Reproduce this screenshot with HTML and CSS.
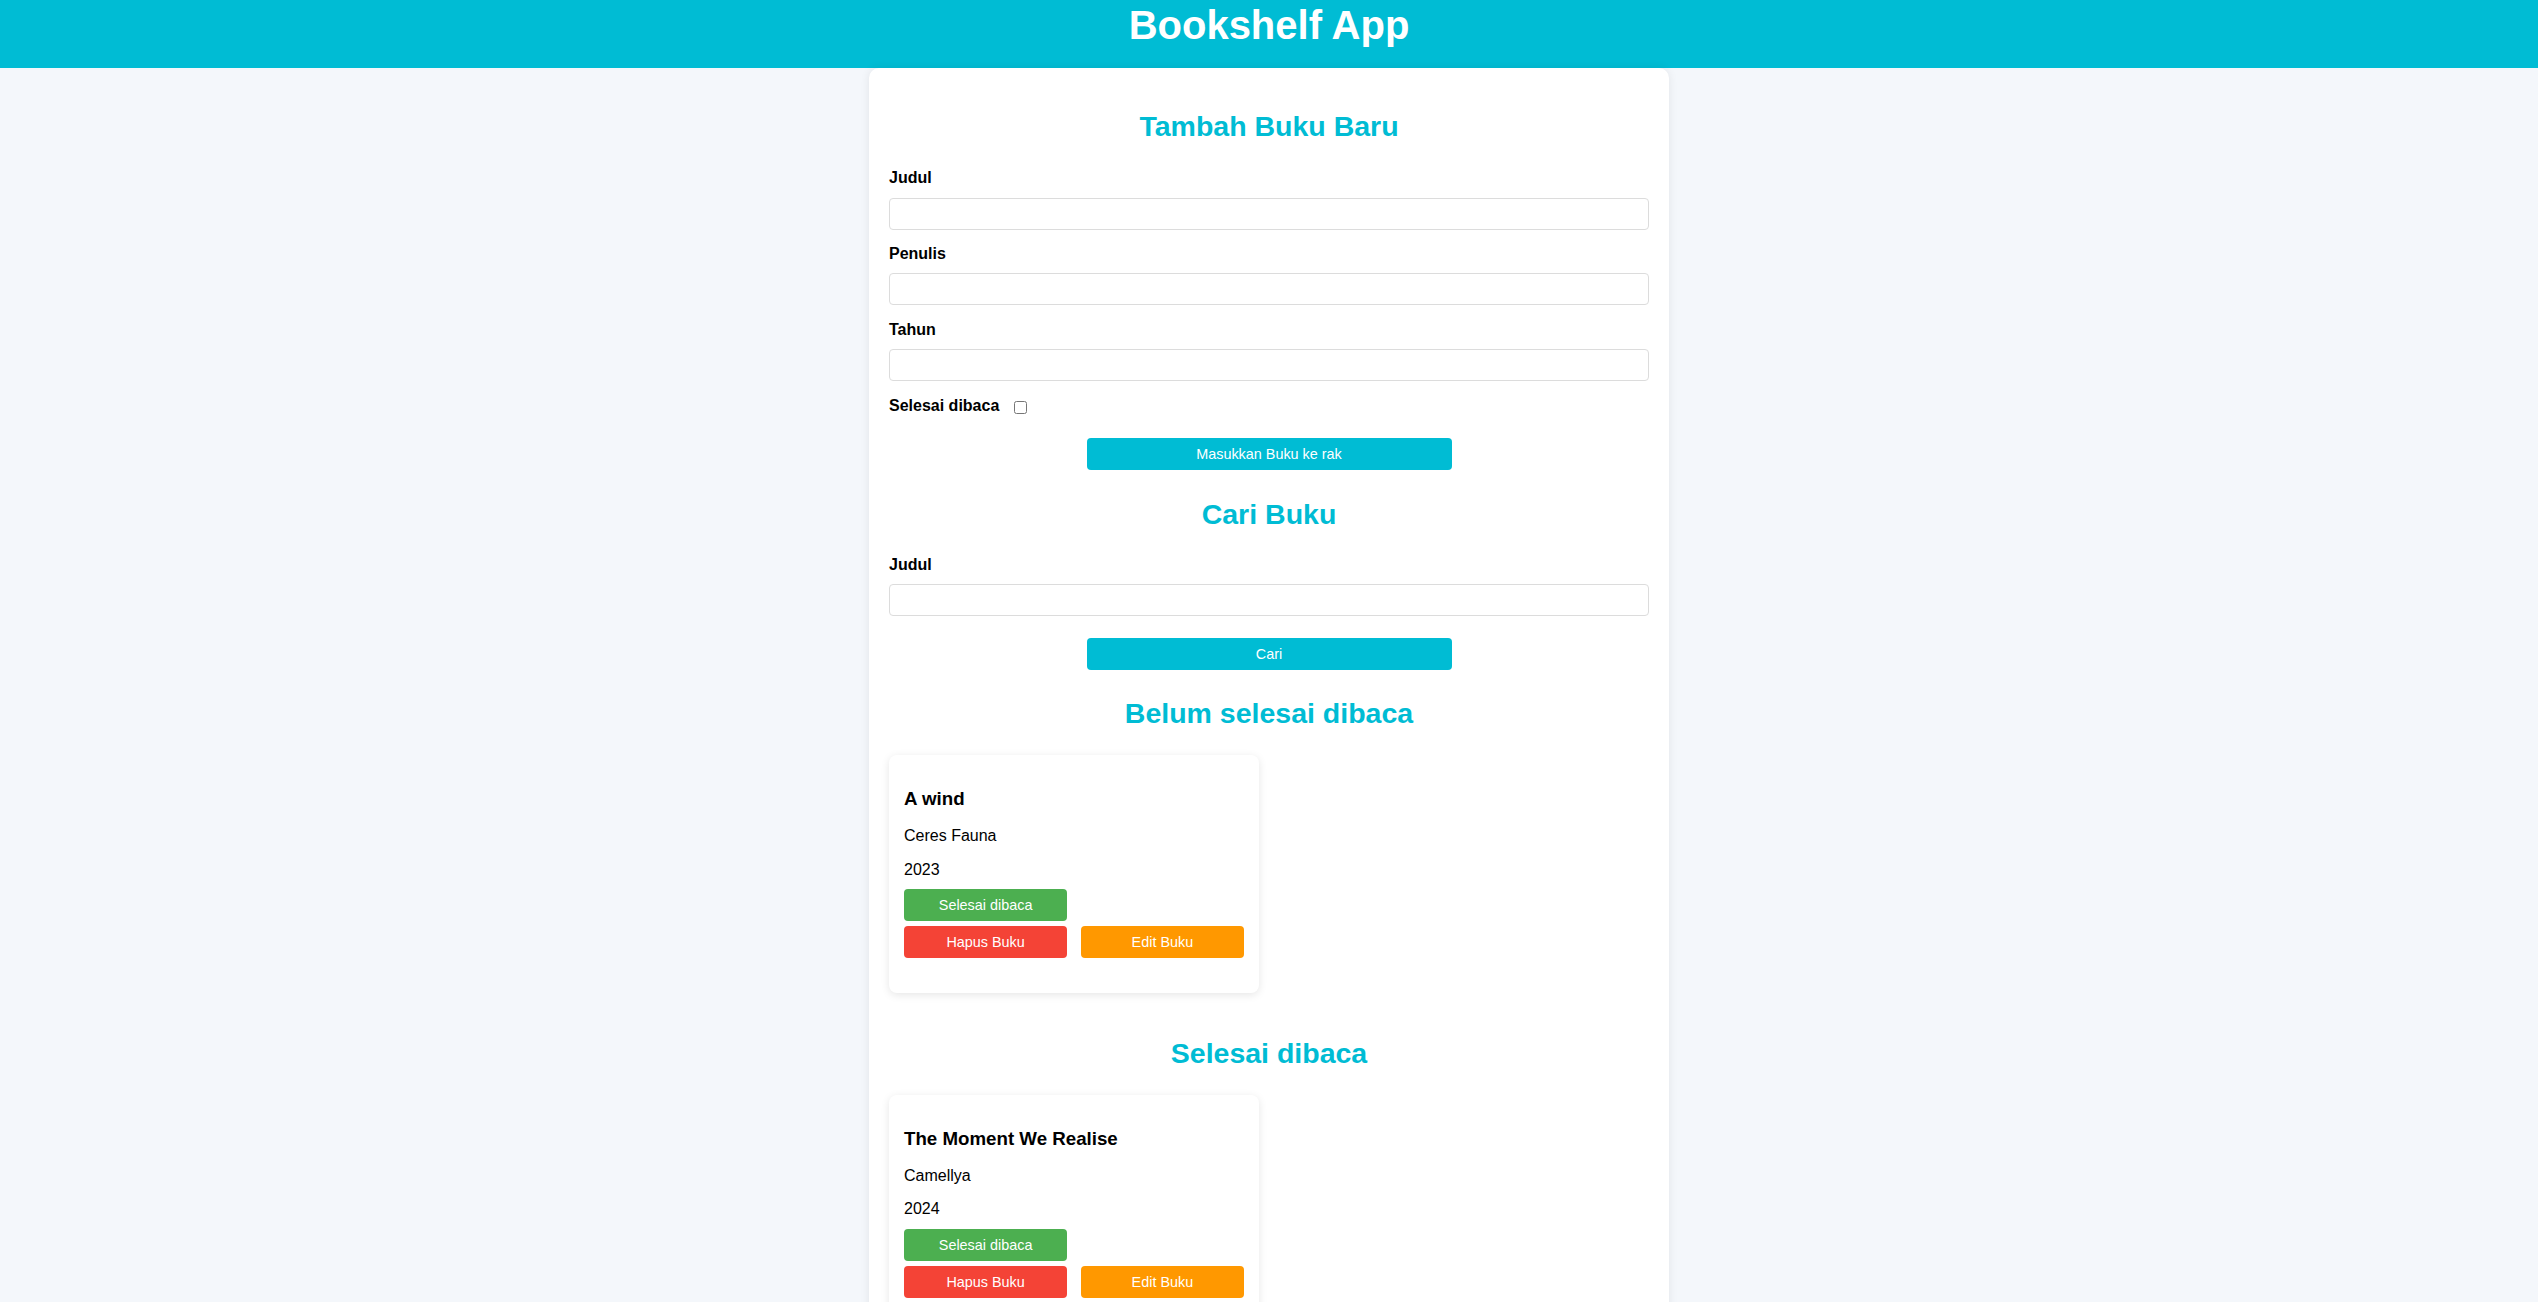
FILE: index.html
```html
<!DOCTYPE html>
<html lang="id">
<head>
<meta charset="utf-8">
<title>Bookshelf App</title>
<link rel="stylesheet" href="styles.css">
</head>
<body>
<header class="app-header">
  <h1 class="app-title">Bookshelf App</h1>
</header>
<main class="container">
  <section class="panel">
    <h2 class="section-title first">Tambah Buku Baru</h2>
    <form class="book-form">
      <div class="field">
        <label class="field-label" for="bookTitle">Judul</label>
        <input class="field-input" id="bookTitle" type="text">
      </div>
      <div class="field">
        <label class="field-label" for="bookAuthor">Penulis</label>
        <input class="field-input" id="bookAuthor" type="text">
      </div>
      <div class="field">
        <label class="field-label" for="bookYear">Tahun</label>
        <input class="field-input" id="bookYear" type="number">
      </div>
      <div class="field-check">
        <label class="check-label" for="bookComplete">Selesai dibaca</label>
        <input class="check-box" id="bookComplete" type="checkbox">
      </div>
      <button class="btn-primary btn-submit" type="button">Masukkan Buku ke rak</button>
    </form>
  </section>

  <section class="panel">
    <h2 class="section-title search-title">Cari Buku</h2>
    <form class="search-form">
      <div class="field">
        <label class="field-label" for="searchTitle">Judul</label>
        <input class="field-input" id="searchTitle" type="text">
      </div>
      <button class="btn-primary btn-search" type="button">Cari</button>
    </form>
  </section>

  <section class="shelf">
    <h2 class="section-title shelf-title">Belum selesai dibaca</h2>
    <div class="book-list">
      <article class="book-card">
        <h3 class="book-title">A wind</h3>
        <p class="book-author">Ceres Fauna</p>
        <p class="book-year">2023</p>
        <div class="book-actions">
          <button class="btn btn-green" type="button">Selesai dibaca</button>
          <span class="spacer"></span>
          <button class="btn btn-red" type="button">Hapus Buku</button>
          <button class="btn btn-orange" type="button">Edit Buku</button>
        </div>
      </article>
    </div>
  </section>

  <section class="shelf">
    <h2 class="section-title shelf-title shelf-next">Selesai dibaca</h2>
    <div class="book-list">
      <article class="book-card">
        <h3 class="book-title">The Moment We Realise</h3>
        <p class="book-author">Camellya</p>
        <p class="book-year">2024</p>
        <div class="book-actions">
          <button class="btn btn-green" type="button">Selesai dibaca</button>
          <span class="spacer"></span>
          <button class="btn btn-red" type="button">Hapus Buku</button>
          <button class="btn btn-orange" type="button">Edit Buku</button>
        </div>
      </article>
    </div>
  </section>
</main>
</body>
</html>
```

FILE: styles.css
```css
* {
  box-sizing: border-box;
}

body {
  margin: 0;
  background: #f4f7fb;
  font-family: "Liberation Sans", Arial, sans-serif;
  color: #000;
}

.app-header {
  background: #00bcd4;
  padding: 2px 0 20px;
}

.app-title {
  margin: 0;
  font-size: 40px;
  line-height: 46px;
  font-weight: bold;
  color: #fff;
  text-align: center;
}

.container {
  width: 800px;
  margin: 0 auto;
  padding: 20px;
  background: #fff;
  border-radius: 10px;
  box-shadow: 0 0 10px rgba(0, 0, 0, 0.08);
}

.section-title {
  margin: 0;
  font-size: 28.5px;
  font-weight: bold;
  color: #00bcd4;
  text-align: center;
}

.section-title.first {
  margin: 21.5px 0 26.9px;
}

.section-title.search-title {
  margin: 28.7px 0 24.5px;
}

.section-title.shelf-title {
  margin: 27.7px 0 25px;
}

.section-title.shelf-next {
  margin-top: 44.4px;
}

.field {
  margin-bottom: 15.5px;
}

.field-label {
  display: block;
  margin-bottom: 10.3px;
  font-size: 16px;
  font-weight: bold;
}

.field-input {
  display: block;
  width: 100%;
  height: 32px;
  padding: 6px 8px;
  border: 1px solid #dcdcdc;
  border-radius: 4px;
  background: #fff;
  font-family: inherit;
  font-size: 14px;
}

.field-check {
  display: flex;
  align-items: center;
  margin-top: 2.5px;
}

.check-label {
  font-size: 16px;
  font-weight: bold;
  margin-right: 11px;
}

.check-box {
  width: 13px;
  height: 13px;
  margin: 4px 3px 0 4px;
}

.btn-primary {
  display: block;
  width: 365px;
  height: 32px;
  margin: 0 auto;
  border: none;
  border-radius: 4px;
  background: #00bcd4;
  color: #fff;
  font-family: inherit;
  font-size: 14.4px;
  padding: 0;
}

.btn-submit {
  margin-top: 23px;
}

.search-form .field {
  margin-bottom: 21.3px;
}

.book-list {
  display: grid;
  grid-template-columns: 1fr 1fr;
  gap: 20px;
}

.book-card {
  padding: 15px;
  background: #fff;
  border-radius: 8px;
  box-shadow: 0 2px 8px rgba(0, 0, 0, 0.1);
}

.book-title {
  margin: 17.5px 0 17px;
  font-size: 18.72px;
  font-weight: bold;
}

.book-author {
  margin: 0 0 15.8px;
  font-size: 16px;
}

.book-year {
  margin: 0 0 10.8px;
  font-size: 16px;
}

.book-actions {
  display: grid;
  grid-template-columns: 48% 48%;
  justify-content: space-between;
  row-gap: 5px;
  margin-bottom: 19.3px;
}

.btn {
  height: 32px;
  border: none;
  border-radius: 4px;
  color: #fff;
  font-family: inherit;
  font-size: 14.4px;
  padding: 0;
}

.btn-green {
  background: #4caf50;
}

.btn-red {
  background: #f44336;
}

.btn-orange {
  background: #ff9800;
}
```
